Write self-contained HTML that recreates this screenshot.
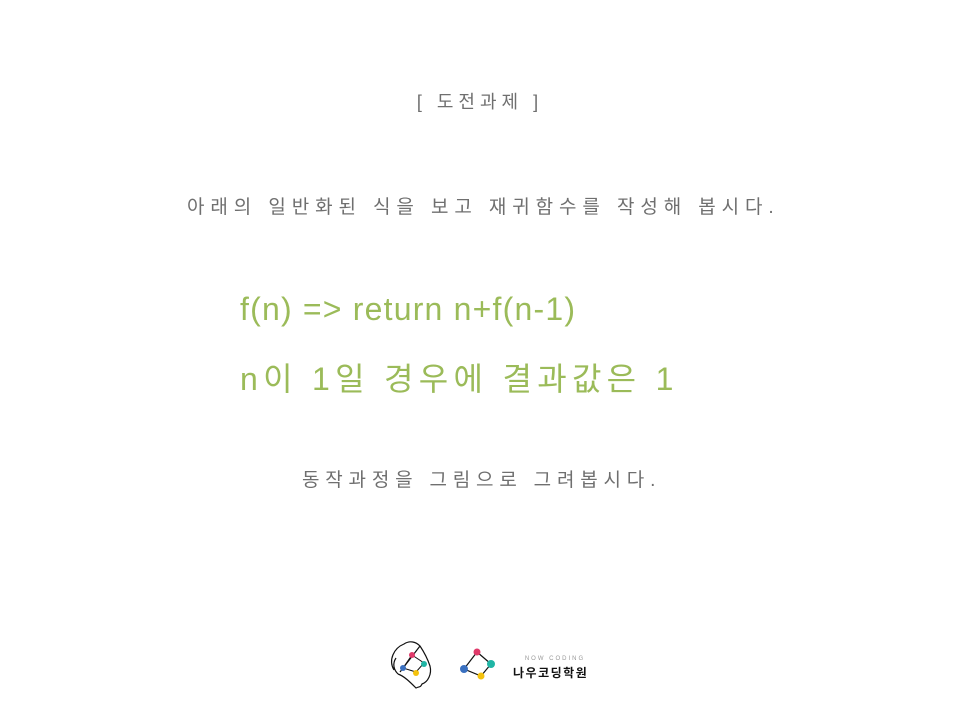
<!DOCTYPE html>
<html><head><meta charset="utf-8"><style>
body{margin:0;width:960px;height:720px;background:#fff;position:relative;overflow:hidden;font-family:"Liberation Sans","Noto Sans CJK KR",sans-serif}
.t{position:absolute;white-space:nowrap;color:#6f6f6f}
.g{position:absolute;white-space:nowrap;color:#9bbb59;font-size:32px;left:240px}
</style></head><body>
<div class="t" style="left:0;width:960px;text-align:center;top:88px;font-size:18px;letter-spacing:5px">[ 도전과제 ]</div>
<div class="t" style="left:187px;top:192px;font-size:19px;letter-spacing:5.9px">아래의 일반화된 식을 보고 재귀함수를 작성해 봅시다.</div>
<div class="g" style="top:291px;letter-spacing:1.2px">f(n) =&gt; return n+f(n-1)</div>
<div class="g" style="top:354px;letter-spacing:5.3px">n이 1일 경우에 결과값은 1</div>
<div class="t" style="left:302px;top:465px;font-size:19px;letter-spacing:5.8px">동작과정을 그림으로 그려봅시다.</div>
<svg style="position:absolute;left:380px;top:630px" width="220" height="65" viewBox="0 0 220 65">
<path d="M14 40 C8 30 14 18 24 14 C30 10 36 12 40 16 L20 42 M18 44 C14 40 12 34 16 28 M40 16 C44 22 48 30 50 36 C52 44 48 52 42 54 C40 58 40 56 36 58 C30 52 24 46 18 44" fill="none" stroke="#111" stroke-width="1.2"/>
<path d="M32 25 L44 33 L36 42 L23 38 Z" fill="none" stroke="#111" stroke-width="1"/>
<circle cx="32" cy="25" r="3" fill="#e03a6a"/><circle cx="44" cy="34" r="3" fill="#1fb5a5"/><circle cx="36" cy="43" r="3" fill="#f4c20d"/><circle cx="23" cy="38" r="3" fill="#3a70c0"/>
<path d="M97 22 L111 34 L101 46 L84 39 Z" fill="none" stroke="#111" stroke-width="1.2"/>
<circle cx="97" cy="22" r="3.5" fill="#e03a6a"/><circle cx="111" cy="34" r="4" fill="#1fb5a5"/><circle cx="101" cy="46" r="3.5" fill="#f4c20d"/><circle cx="84" cy="39" r="4" fill="#3a70c0"/>
<text x="175" y="30" font-size="6" fill="#999" text-anchor="middle" letter-spacing="2" font-family="Liberation Sans">NOW CODING</text>
<text x="133" y="47" font-size="12" fill="#111" font-weight="bold" letter-spacing="1.5" font-family="Noto Sans CJK KR,sans-serif">나우코딩학원</text>
</svg>
</body></html>
